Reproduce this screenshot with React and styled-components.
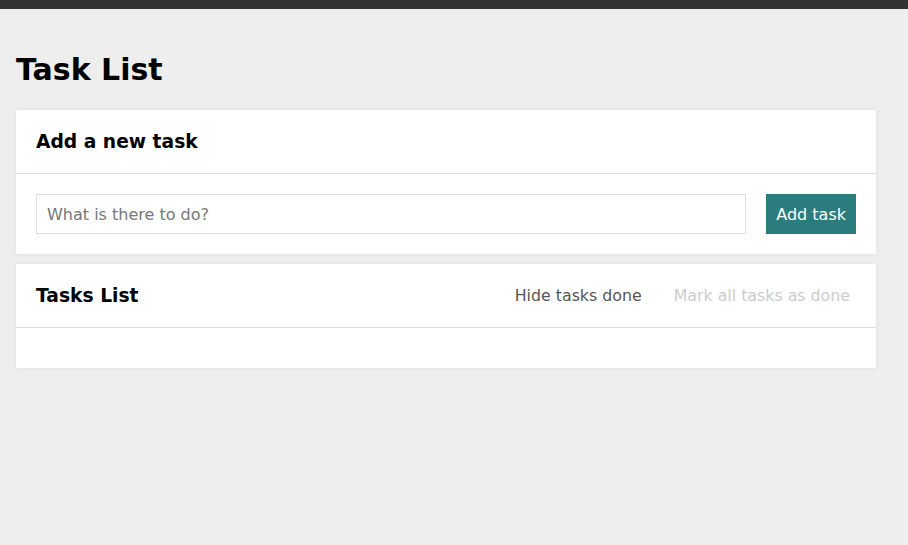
import React from 'react';
import styled, { createGlobalStyle } from 'styled-components';

const GlobalStyle = createGlobalStyle`
  body {
    margin: 0;
    background-color: #eeeeee;
    font-family: "DejaVu Sans", "Open Sans", sans-serif;
  }
`;

const TopBar = styled.div`
  height: 9px;
  background-color: #333333;
`;

const Main = styled.main`
  width: 860px;
  margin: 0 16px;
  padding-top: 16px;
`;

const Title = styled.h1`
  margin: 25px 0 20px;
  font-size: 30px;
  line-height: 40px;
  font-weight: bold;
  color: #000;
`;

const Section = styled.section`
  background-color: white;
  margin-bottom: 10px;
  box-shadow: 0 0 5px rgba(0, 0, 0, 0.06);
`;

const Header = styled.header`
  display: flex;
  align-items: center;
  justify-content: space-between;
  height: 63px;
  padding: 0 20px;
  border-bottom: 1px solid #dddddd;
`;

const SectionTitle = styled.h2`
  margin: 0;
  font-size: 18.7px;
  font-weight: bold;
  color: #000;
`;

const Body = styled.div`
  display: flex;
  gap: 20px;
  padding: 20px;
`;

const Input = styled.input`
  flex: 1;
  height: 40px;
  box-sizing: border-box;
  border: 1px solid #dddddd;
  padding: 0 10px;
  font-family: inherit;
  font-size: 16px;
  color: #333;
  outline: none;

  &::placeholder {
    color: #777777;
  }
`;

const AddButton = styled.button`
  height: 40px;
  padding: 0 10px;
  border: none;
  background-color: #2b7c7c;
  color: white;
  font-family: inherit;
  font-size: 16px;
  cursor: pointer;
`;

const Actions = styled.div`
  display: flex;
  gap: 20px;
`;

const TextButton = styled.button`
  border: none;
  background: none;
  padding: 0 6px;
  font-family: inherit;
  font-size: 15.8px;
  color: ${({ disabled }) => (disabled ? '#cccccc' : '#555555')};
  cursor: ${({ disabled }) => (disabled ? 'default' : 'pointer')};
`;

const App = () => {
  return (
    <>
      <GlobalStyle />
      <TopBar />
      <Main>
        <Title>Task List</Title>
        <Section>
          <Header>
            <SectionTitle>Add a new task</SectionTitle>
          </Header>
          <Body as="form" onSubmit={e => e.preventDefault()}>
            <Input placeholder="What is there to do?" />
            <AddButton>Add task</AddButton>
          </Body>
        </Section>
        <Section>
          <Header>
            <SectionTitle>Tasks List</SectionTitle>
            <Actions>
              <TextButton>Hide tasks done</TextButton>
              <TextButton disabled>Mark all tasks as done</TextButton>
            </Actions>
          </Header>
          <Body />
        </Section>
      </Main>
    </>
  );
};

export default App;
